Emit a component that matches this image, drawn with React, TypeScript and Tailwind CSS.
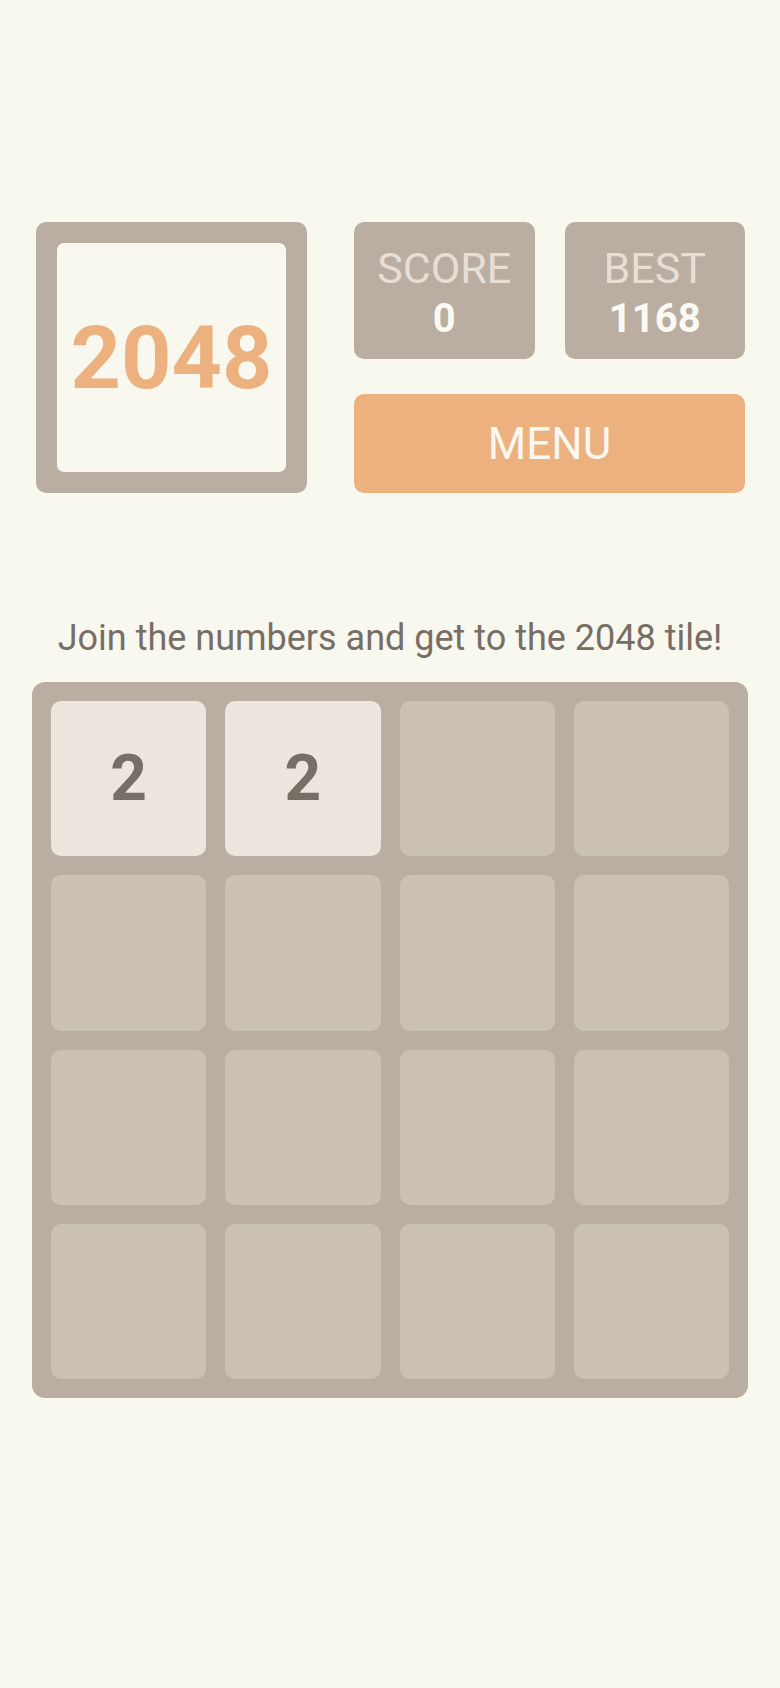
const tiles: (number | null)[] = [2, 2, null, null, null, null, null, null, null, null, null, null, null, null, null, null];

function StatBox({ label, value }: { label: string; value: string }) {
  return (
    <div className="flex h-[137px] flex-1 flex-col items-center rounded-[10px] bg-[#b9aea1] pt-[25px]">
      <span className="text-[43px] leading-none text-[#e7dfd6]">{label}</span>
      <span className="mt-[9px] text-[40px] font-bold leading-none text-[#fbf9f3]">{value}</span>
    </div>
  );
}

export default function App() {
  return (
    <div className="min-h-[1688px] bg-[#f9f8ef] pt-[222px] font-['Roboto',sans-serif]">
      <header className="flex gap-[47px] pl-[36px] pr-[35px]">
        <div className="flex h-[271px] w-[271px] shrink-0 rounded-[10px] bg-[#b9aea1] p-[21px]">
          <div className="flex flex-1 items-center justify-center rounded-[7px] bg-[#f9f8ef]">
            <span className="text-[88px] font-bold leading-none text-[#ecb17f]">2048</span>
          </div>
        </div>
        <div className="flex flex-1 flex-col">
          <div className="flex gap-[30px]">
            <StatBox label="SCORE" value="0" />
            <StatBox label="BEST" value="1168" />
          </div>
          <button className="mt-[35px] flex h-[99px] items-center justify-center rounded-[10px] bg-[#ecb17f] text-[44px] leading-none text-[#fbf8f0]">
            MENU
          </button>
        </div>
      </header>

      <p className="mt-[124px] text-center text-[36px] leading-[42px] text-[#776e65]">
        Join the numbers and get to the 2048 tile!
      </p>

      <div className="mx-[32px] mt-[23px] grid h-[716px] grid-cols-4 grid-rows-4 gap-[19px] rounded-[13px] bg-[#b9aea1] p-[19px]">
        {tiles.map((t, i) => (
          <div
            key={i}
            className={
              t
                ? 'flex items-center justify-center rounded-[10px] bg-[#eee5df] text-[64px] font-bold leading-none text-[#776e65]'
                : 'rounded-[10px] bg-[#cac1b4]'
            }
          >
            {t}
          </div>
        ))}
      </div>
    </div>
  );
}
